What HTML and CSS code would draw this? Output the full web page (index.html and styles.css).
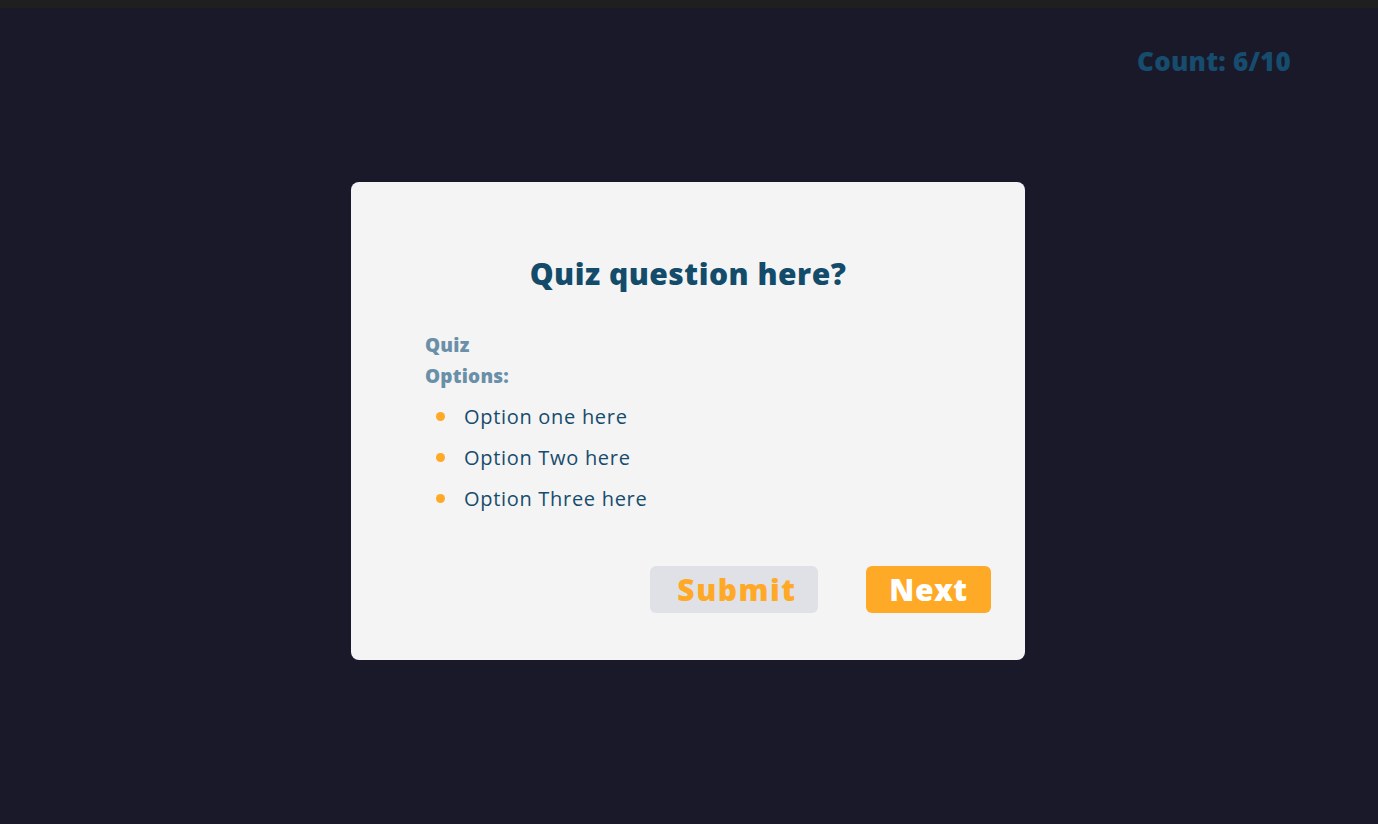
FILE: index.html
```html
<!DOCTYPE html>
<html>
<head>
<meta charset="utf-8">
<link rel="stylesheet" href="styles.css">
</head>
<body>
<div class="topbar"></div>
<header class="header">
  <div class="count">Count: 6/10</div>
</header>
<main class="stage">
  <section class="card">
    <h1 class="question">Quiz question here?</h1>
    <div class="options">
      <h2 class="options-label">Quiz Options:</h2>
      <ul class="option-list">
        <li>Option one here</li>
        <li>Option Two here</li>
        <li>Option Three here</li>
      </ul>
    </div>
    <div class="actions">
      <button class="btn btn-submit">Submit</button>
      <button class="btn btn-next">Next</button>
    </div>
  </section>
</main>
</body>
</html>
```
FILE: styles.css
```css
html, body {
  margin: 0;
  padding: 0;
}
body {
  background: #1a1929;
  height: 824px;
  overflow: hidden;
  font-family: "Open Sans", "DejaVu Sans", sans-serif;
}
.topbar {
  height: 8px;
  background: #1f1f1f;
}
.header {
  display: flex;
  justify-content: flex-end;
  padding: 38px 87px 0 0;
  height: 64px;
  box-sizing: border-box;
}
.count {
  color: #164c6d;
  font-weight: 800;
  font-size: 26px;
  line-height: 30px;
  letter-spacing: 0.2px;
}
.stage {
  display: flex;
  justify-content: center;
  padding: 110px 2px 0 0;
}
.card {
  width: 674px;
  height: 478px;
  box-sizing: border-box;
  background: #f4f4f4;
  border-radius: 8px;
  padding: 70px 34px 0 75px;
}
.question {
  margin: 0 0 0 -41px;
  text-align: center;
  color: #134b6b;
  font-size: 30px;
  line-height: 44px;
  font-weight: 800;
  letter-spacing: 0.5px;
}
.options {
  margin-top: 34px;
}
.options-label {
  margin: 0 0 0 -1px;
  width: 100px;
  color: #6a8fa8;
  font-size: 19px;
  line-height: 31px;
  font-weight: 800;
  letter-spacing: 0.2px;
}
.option-list {
  margin: 4px 0 0 0;
  padding: 0;
  list-style: none;
}
.option-list li {
  display: flex;
  align-items: center;
  height: 41px;
  color: #164c6d;
  font-size: 20px;
  font-weight: 400;
  letter-spacing: 0.7px;
}
.option-list li::before {
  content: "";
  width: 9px;
  height: 9px;
  border-radius: 50%;
  background: #ffa927;
  margin: 0 19px 0 10px;
  flex-shrink: 0;
}
.actions {
  display: flex;
  justify-content: flex-end;
  gap: 48px;
  margin-top: 47px;
}
.btn {
  border: none;
  border-radius: 6px;
  height: 47px;
  font-family: "Open Sans", "DejaVu Sans", sans-serif;
  font-size: 30px;
  line-height: 47px;
  font-weight: 800;
  padding: 0;
  cursor: pointer;
}
.btn-submit {
  width: 168px;
  background: #e0e1e6;
  color: #ffa927;
  letter-spacing: 1.5px;
  padding-left: 6px;
}
.btn-next {
  width: 125px;
  background: #ffaa27;
  color: #ffffff;
  letter-spacing: 0.5px;
}
```
